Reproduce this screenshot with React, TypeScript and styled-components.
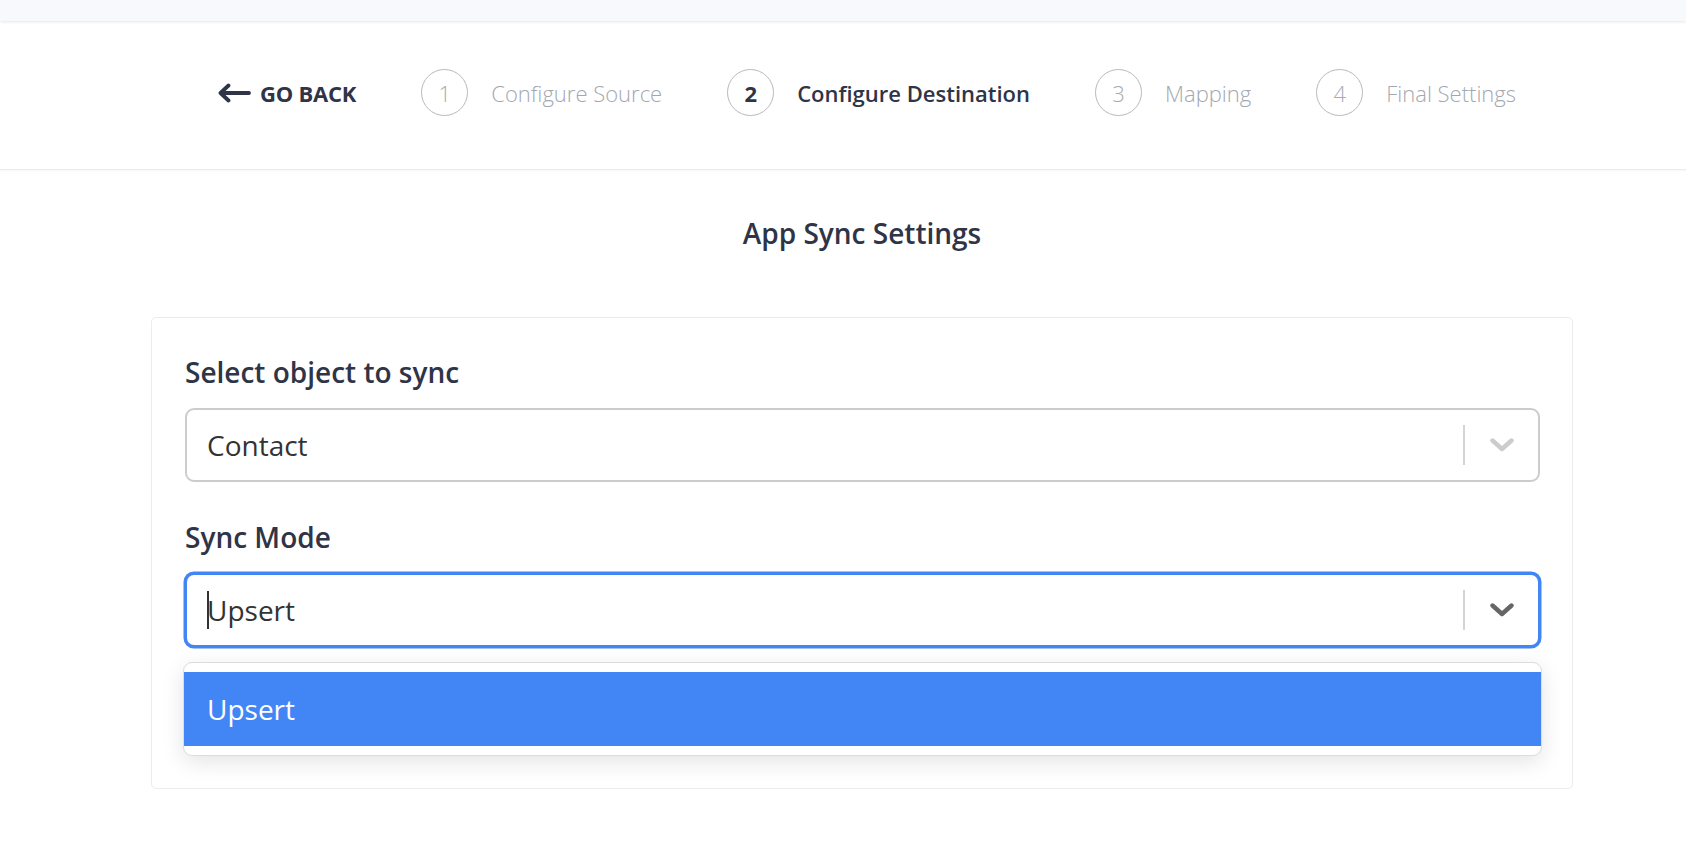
import React from "react";
import styled, { createGlobalStyle } from "styled-components";

const GlobalStyle = createGlobalStyle`
  html, body {
    margin: 0;
    padding: 0;
    background: #ffffff;
    font-family: "Open Sans", "Noto Sans", sans-serif;
  }
  * {
    box-sizing: border-box;
  }
`;

const TopBar = styled.div`
  height: 21px;
  background: #f8f9fc;
  box-shadow: 0 1px 3px rgba(0, 0, 0, 0.1);
  position: relative;
  z-index: 2;
`;

const Header = styled.header`
  background: #ffffff;
  border-bottom: 1px solid #ebebef;
  box-shadow: 0 1px 2px rgba(0, 0, 0, 0.04);
  padding: 48px 0 53px 48px;
  display: flex;
  justify-content: center;
`;

const StepsRow = styled.nav`
  display: flex;
  align-items: center;
  gap: 65px;
`;

const BackLink = styled.a`
  display: flex;
  align-items: center;
  gap: 9px;
  color: #2f3447;
  text-decoration: none;
  cursor: pointer;
`;

const BackText = styled.span`
  font-size: 22px;
  font-weight: 700;
  letter-spacing: -0.2px;
  text-transform: uppercase;
`;

const Step = styled.div`
  display: flex;
  align-items: center;
  gap: 23px;
`;

const StepCircle = styled.span<{ $active?: boolean }>`
  width: 47px;
  height: 47px;
  border-radius: 50%;
  border: 1.5px solid #b6bac0;
  display: flex;
  align-items: center;
  justify-content: center;
  font-size: 22px;
  font-weight: ${(p) => (p.$active ? 700 : 300)};
  color: ${(p) => (p.$active ? "#2f3447" : "#a7abb2")};
`;

const StepLabel = styled.span<{ $active?: boolean }>`
  font-size: 22px;
  font-weight: ${(p) => (p.$active ? 600 : 300)};
  color: ${(p) => (p.$active ? "#2f3447" : "#a3a8b0")};
  white-space: nowrap;
`;

const Main = styled.main`
  padding: 44px 113px 60px 151px;
  display: flex;
  flex-direction: column;
  align-items: center;
`;

const Title = styled.h2`
  margin: 0 0 65px;
  font-size: 28px;
  line-height: 38px;
  font-weight: 600;
  color: #2f3447;
`;

const Card = styled.section`
  width: 100%;
  background: #ffffff;
  border: 1.5px solid #ebebf0;
  border-radius: 5px;
  padding: 35px 32px 141px 33px;
  display: flex;
  flex-direction: column;
  gap: 36px;
`;

const Field = styled.div`
  display: flex;
  flex-direction: column;
  gap: 17px;
`;

const Label = styled.label`
  font-size: 28px;
  line-height: 38px;
  font-weight: 600;
  color: #2f3447;
`;

const SelectWrap = styled.div`
  position: relative;
`;

const Control = styled.div<{ $focused?: boolean }>`
  height: 74px;
  display: flex;
  align-items: center;
  border-radius: 9px;
  background: #ffffff;
  border: 2px solid ${(p) => (p.$focused ? "#4285f4" : "#cccccc")};
  box-shadow: ${(p) => (p.$focused ? "0 0 0 1.5px #4285f4" : "none")};
`;

const ValueBox = styled.div`
  flex: 1;
  display: flex;
  align-items: center;
  padding-left: 20px;
  font-size: 28px;
  color: #333333;
`;

const Caret = styled.span`
  display: inline-block;
  width: 2px;
  height: 38px;
  background: #333333;
  margin-right: -2px;
`;

const Separator = styled.span`
  width: 2px;
  height: 40px;
  background: #d4d4d4;
`;

const Indicator = styled.span<{ $color: string }>`
  display: flex;
  align-items: center;
  padding: 0 24px 0 25px;
  color: ${(p) => p.$color};
`;

const Menu = styled.div`
  position: absolute;
  top: calc(100% + 15px);
  left: -2px;
  right: -2px;
  background: #ffffff;
  border: 1.5px solid #dcdcdc;
  border-radius: 9px;
  box-shadow: 0 6px 22px rgba(0, 0, 0, 0.11);
  padding: 9px 0 9px;
  z-index: 5;
`;

const Option = styled.div<{ $selected?: boolean }>`
  height: 74px;
  display: flex;
  align-items: center;
  padding-left: 23px;
  font-size: 28px;
  background: ${(p) => (p.$selected ? "#4286f5" : "#ffffff")};
  color: ${(p) => (p.$selected ? "#ffffff" : "#333333")};
`;

const ArrowLeft = () => (
  <svg width="33" height="20" viewBox="0 0 33 20" fill="none">
    <path
      d="M10.5 2.5 L2.5 10 L10.5 17.5 M2.5 10 H31"
      stroke="currentColor"
      strokeWidth="3.8"
      strokeLinecap="round"
      strokeLinejoin="round"
    />
  </svg>
);

const Chevron = () => (
  <svg width="24" height="14" viewBox="0 0 24 14" fill="none">
    <polyline
      points="2.5,2.5 12,11 21.5,2.5"
      stroke="currentColor"
      strokeWidth="4.4"
      strokeLinecap="round"
      strokeLinejoin="round"
    />
  </svg>
);

const steps = [
  { n: 1, label: "Configure Source" },
  { n: 2, label: "Configure Destination", active: true },
  { n: 3, label: "Mapping" },
  { n: 4, label: "Final Settings" },
];

const App = () => {
  return (
    <>
      <GlobalStyle />
      <TopBar />
      <Header>
        <StepsRow>
          <BackLink>
            <ArrowLeft />
            <BackText>Go Back</BackText>
          </BackLink>
          {steps.map((s) => (
            <Step key={s.n}>
              <StepCircle $active={s.active}>{s.n}</StepCircle>
              <StepLabel $active={s.active}>{s.label}</StepLabel>
            </Step>
          ))}
        </StepsRow>
      </Header>
      <Main>
        <Title>App Sync Settings</Title>
        <Card>
          <Field>
            <Label>Select object to sync</Label>
            <SelectWrap>
              <Control>
                <ValueBox>Contact</ValueBox>
                <Separator />
                <Indicator $color="#cccccc">
                  <Chevron />
                </Indicator>
              </Control>
            </SelectWrap>
          </Field>
          <Field>
            <Label>Sync Mode</Label>
            <SelectWrap>
              <Control $focused>
                <ValueBox>
                  <Caret />
                  Upsert
                </ValueBox>
                <Separator />
                <Indicator $color="#666666">
                  <Chevron />
                </Indicator>
              </Control>
              <Menu>
                <Option $selected>Upsert</Option>
              </Menu>
            </SelectWrap>
          </Field>
        </Card>
      </Main>
    </>
  );
};

export default App;
